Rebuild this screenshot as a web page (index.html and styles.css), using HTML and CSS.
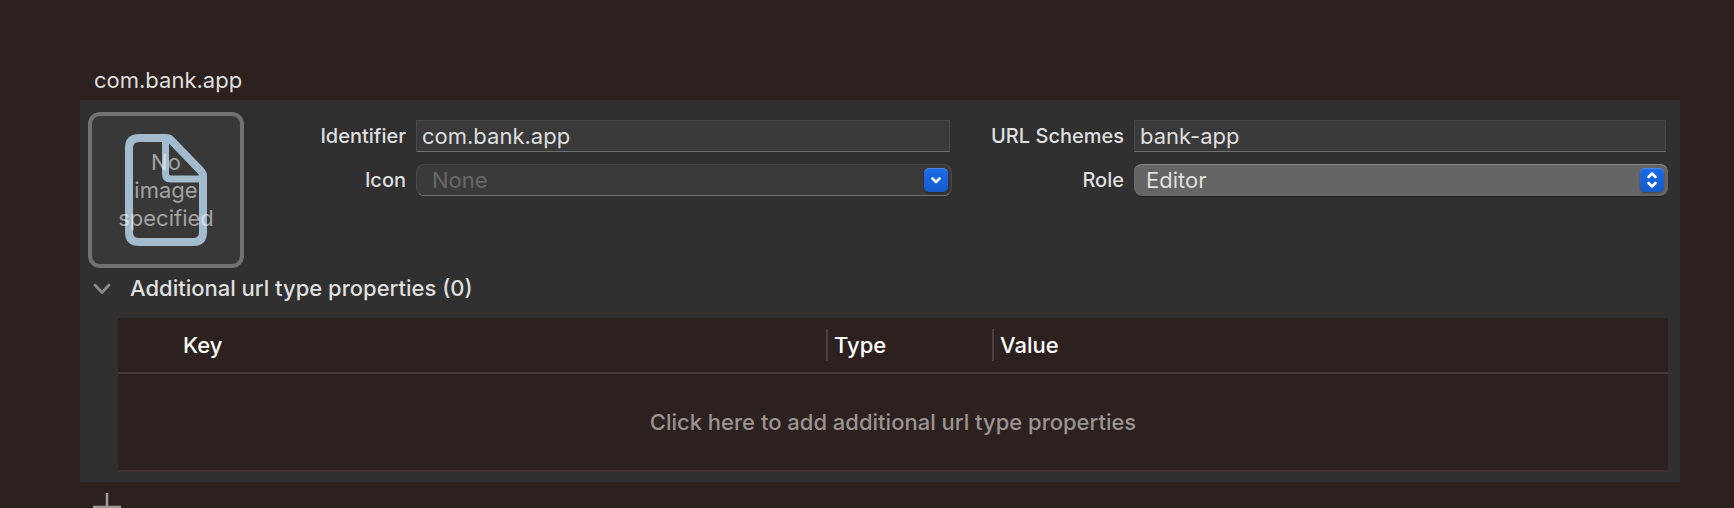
FILE: index.html
```html
<!DOCTYPE html>
<html lang="en">
<head>
<meta charset="utf-8">
<title>URL Types</title>
<link rel="stylesheet" href="styles.css">
</head>
<body>
<main class="page">
  <h1 class="title">com.bank.app</h1>
  <section class="panel">
    <div class="top">
      <div class="well">
        <svg class="well-icon" width="82" height="112" viewBox="0 0 82 112" fill="none" stroke="#a3bccd" stroke-width="8" stroke-linejoin="round">
          <path d="M14 4H41Q44 4 46 6L75 36Q78 39 78 42V98Q78 108 68 108H14Q4 108 4 98V14Q4 4 14 4Z"/>
          <path stroke-width="7" d="M40.500 5V40Q40.500 45 45.500 45H77"/>
        </svg>
        <p class="well-text">No<br>image<br>specified</p>
      </div>
      <form class="form">
        <label class="label" for="identifier">Identifier</label>
        <input class="field" id="identifier" type="text" value="com.bank.app">
        <label class="label" for="schemes">URL Schemes</label>
        <input class="field" id="schemes" type="text" value="bank-app">
        <label class="label" for="icon">Icon</label>
        <div class="combo">
          <input class="combo-input" id="icon" type="text" placeholder="None">
          <button class="cap" type="button" aria-label="Show icons">
            <svg width="24" height="24" viewBox="0 0 24 24" fill="none" stroke="#fff" stroke-width="2.500" stroke-linecap="round" stroke-linejoin="round"><path d="M8.500 10.500L12 14L15.500 10.500"/></svg>
          </button>
        </div>
        <label class="label" for="role">Role</label>
        <div class="popup">
          <select class="select" id="role"><option>Editor</option><option>Viewer</option><option>None</option></select>
          <span class="cap popup-cap">
            <svg width="24" height="24" viewBox="0 0 24 24" fill="none" stroke="#fff" stroke-width="2.500" stroke-linecap="round" stroke-linejoin="round"><path d="M8.500 9L12 5.500L15.500 9M8.500 15L12 18.500L15.500 15"/></svg>
          </span>
        </div>
      </form>
    </div>
    <details class="extra" open>
      <summary class="summary">
        <svg width="18" height="12" viewBox="0 0 18 12" fill="none" stroke="#8a8a8a" stroke-width="2.800" stroke-linecap="round" stroke-linejoin="round"><path d="M2 3L9 10.500L16 3"/></svg>
        <span>Additional url type properties (0)</span>
      </summary>
      <table class="table">
        <thead>
          <tr>
            <th class="key">Key</th>
            <th class="type"><span class="divided">Type</span></th>
            <th><span class="divided">Value</span></th>
          </tr>
        </thead>
        <tbody>
          <tr><td class="empty" colspan="3">Click here to add additional url type properties</td></tr>
        </tbody>
      </table>
    </details>
  </section>
  <button class="add" type="button" aria-label="Add URL type">
    <svg width="28" height="28" viewBox="0 0 28 28" stroke="#a09a98" stroke-width="2.500"><path d="M14 0V28M0 14H28"/></svg>
  </button>
</main>
</body>
</html>
```

FILE: styles.css
```css
* {
  box-sizing: border-box;
}

html {
  height: 100%;
  overflow: hidden;
  background: #2c211e;
}

body {
  margin: 0;
  color: #dfdfdf;
  font-family: Inter, "Liberation Sans", sans-serif;
  font-size: 22px;
  line-height: 28px;
}

input,
select,
button {
  font: inherit;
  color: inherit;
}

.page {
  height: 100vh;
  overflow: hidden;
  padding: 66px 54px 0 80px;
}

.title {
  margin: 0;
  padding: 0 14px 6px;
  font-size: 22px;
  font-weight: 400;
}

.panel {
  padding: 12px 12px 10px 8px;
  background: #303030;
}

.top {
  display: flex;
}

.well {
  display: grid;
  place-items: center;
  flex: none;
  width: 156px;
  height: 156px;
  border: 4px solid #727272;
  border-radius: 12px;
  background: #383838;
}

.well-icon,
.well-text {
  grid-area: 1 / 1;
}

.well-text {
  margin: 0;
  text-align: center;
  color: rgba(255, 255, 255, 0.55);
}

.form {
  display: grid;
  flex: 1;
  grid-template-columns: 162px 536fr 162px 534fr;
  align-content: start;
  align-items: center;
  gap: 12px 10px;
  padding-top: 8px;
}

.label {
  font-size: 20px;
  font-weight: 500;
  text-align: right;
}

.field {
  justify-self: start;
  width: calc(100% - 2px);
  height: 32px;
  padding: 0 5px;
  border: 1px solid #484848;
  border-bottom-color: #707070;
  border-radius: 0;
  background: #3a3a3a;
  outline: none;
}

.combo {
  display: flex;
  align-items: center;
  height: 32px;
  padding-right: 3px;
  border: 1px solid #484848;
  border-bottom-color: #707070;
  border-radius: 8px;
  background: #3a3a3a;
}

.combo-input {
  flex: 1;
  min-width: 0;
  padding: 0 15px;
  border: 0;
  background: none;
  outline: none;
}

.combo-input::placeholder {
  color: #686868;
  opacity: 1;
}

.cap {
  display: block;
  flex: none;
  width: 24px;
  height: 24px;
  padding: 0;
  border: 0;
  border-radius: 5px;
  background: linear-gradient(#1c6ce8, #155bcb);
  box-shadow: 0 1px 2px rgba(0, 0, 0, 0.35), inset 0 1px rgba(255, 255, 255, 0.2);
}

.cap svg {
  display: block;
}

.popup {
  position: relative;
  height: 32px;
}

.select {
  display: block;
  width: 100%;
  height: 32px;
  padding: 0 40px 0 12px;
  appearance: none;
  border: 0;
  border-radius: 8px;
  background: #656565;
  box-shadow: inset 0 1px #858585, 0 1px 1px rgba(0, 0, 0, 0.35);
}

.popup-cap {
  position: absolute;
  top: 4px;
  right: 4px;
  pointer-events: none;
}

.summary {
  display: flex;
  align-items: center;
  gap: 19px;
  height: 40px;
  padding-left: 5px;
  font-weight: 500;
  list-style: none;
}

.table {
  width: calc(100% - 30px);
  margin: 10px 0 0 30px;
  border-collapse: separate;
  border-spacing: 0;
  table-layout: fixed;
  background: #2c211e;
}

.table th {
  height: 56px;
  padding: 0;
  border-bottom: 2px solid #463a37;
  color: #fff;
  font-weight: 500;
  text-align: left;
}

.table .key {
  width: 708px;
  padding-left: 65px;
}

.table .type {
  width: 166px;
}

.divided {
  display: block;
  padding: 2px 0 2px 6px;
  border-left: 2px solid #4b403d;
}

.table .empty {
  height: 98px;
  padding: 0;
  border-bottom: 2px solid #41322f;
  color: #9b9391;
  font-weight: 500;
  text-align: center;
}

.add {
  display: block;
  margin: 11px 0 0 13px;
  padding: 0;
  border: 0;
  background: none;
}
```
